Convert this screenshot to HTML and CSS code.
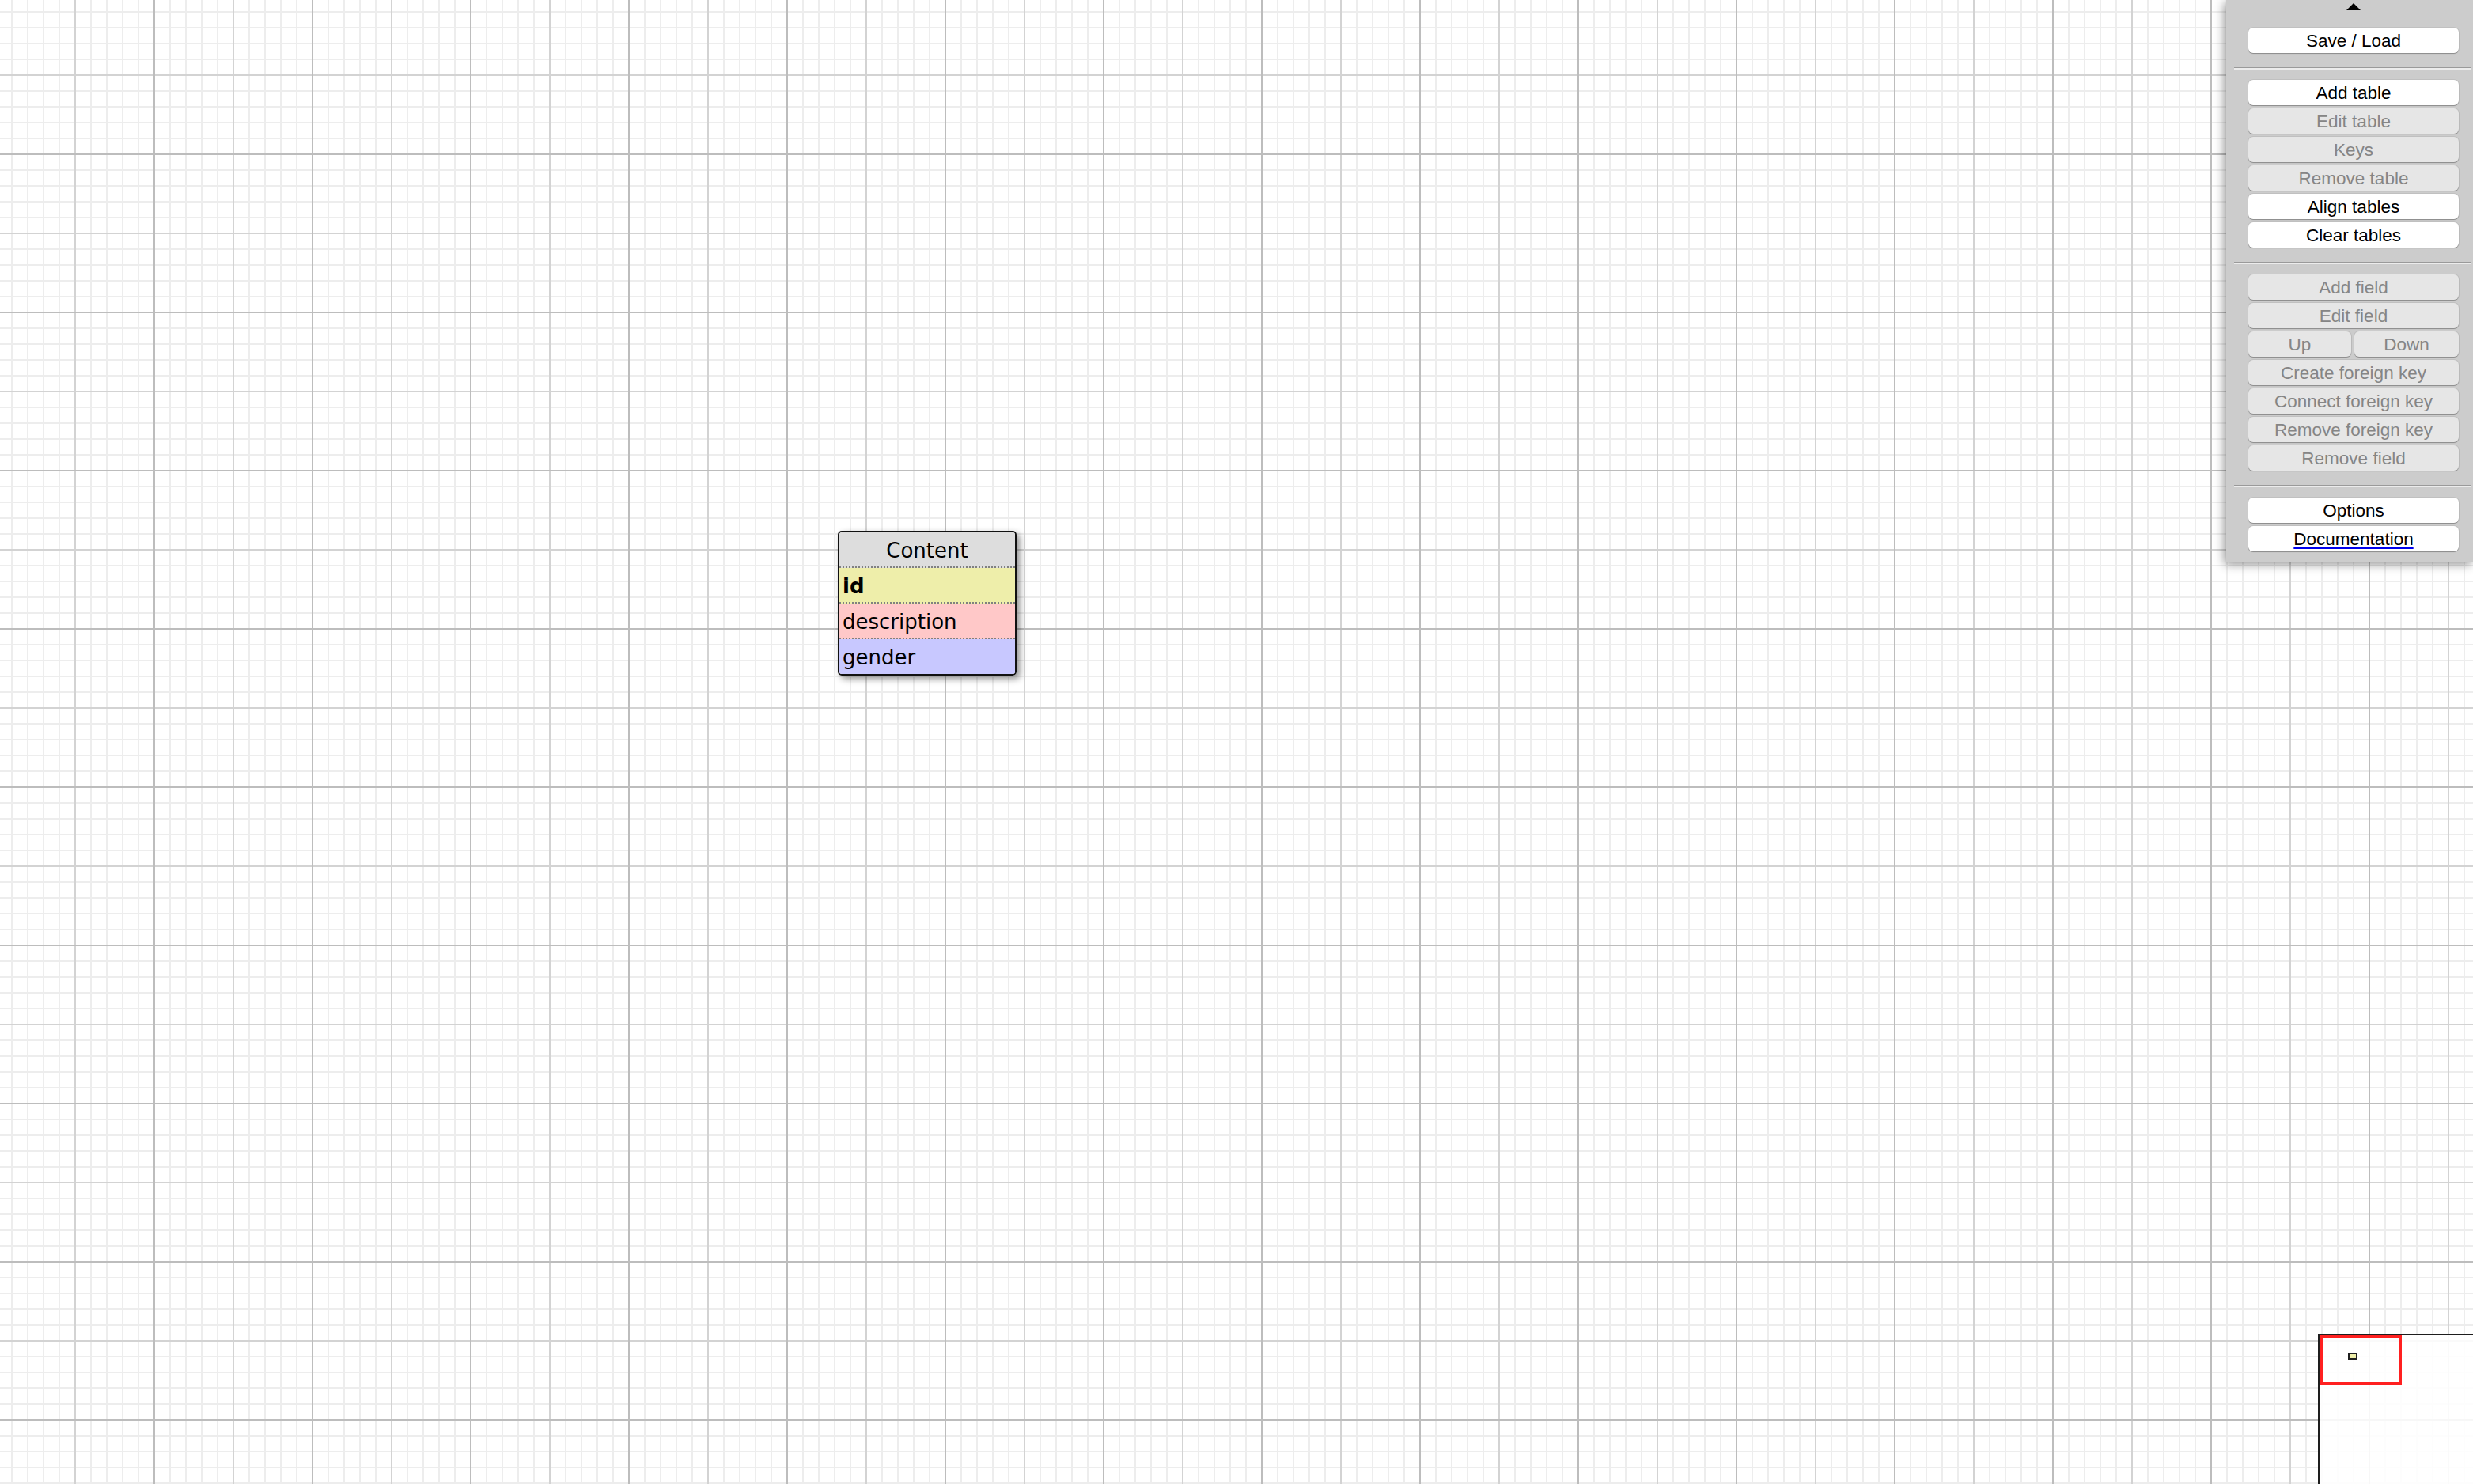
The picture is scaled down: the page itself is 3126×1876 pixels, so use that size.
FILE: index.html
```html
<!DOCTYPE html>
<html>
<head>
<meta charset="utf-8">
<title>WWW SQL Designer</title>
<link rel="stylesheet" href="styles.css">
</head>
<body>
<div class="canvas">
  <div class="db-table">
    <div class="db-title">Content</div>
    <div class="db-row row-key"><b>id</b></div>
    <div class="db-row row-text">description</div>
    <div class="db-row row-enum">gender</div>
  </div>
</div>

<div class="toolbar">
  <div class="toggle"><span class="tri"></span></div>
  <button class="btn">Save / Load</button>
  <div class="sep"></div>
  <div class="group">
    <button class="btn">Add table</button>
    <button class="btn off">Edit table</button>
    <button class="btn off">Keys</button>
    <button class="btn off">Remove table</button>
    <button class="btn">Align tables</button>
    <button class="btn">Clear tables</button>
  </div>
  <div class="sep"></div>
  <div class="group">
    <button class="btn off">Add field</button>
    <button class="btn off">Edit field</button>
    <div class="pair">
      <button class="btn off">Up</button>
      <button class="btn off">Down</button>
    </div>
    <button class="btn off">Create foreign key</button>
    <button class="btn off">Connect foreign key</button>
    <button class="btn off">Remove foreign key</button>
    <button class="btn off">Remove field</button>
  </div>
  <div class="sep"></div>
  <div class="group">
    <button class="btn">Options</button>
    <button class="btn"><span class="link">Documentation</span></button>
  </div>
</div>

<div class="minimap">
  <div class="mini-view"></div>
  <div class="mini-table"></div>
</div>
</body>
</html>
```

FILE: styles.css
```css
html, body {
  margin: 0;
  padding: 0;
  width: 3126px;
  height: 1876px;
  overflow: hidden;
  background: #ffffff;
}

body {
  position: relative;
}

.canvas {
  position: relative;
  width: 3126px;
  height: 1876px;
  background-color: #ffffff;
  background-image:
    linear-gradient(to right, transparent 194px, #bdbdbd 194px, #bdbdbd 196px, transparent 196px),
    linear-gradient(to bottom, transparent 194px, #bdbdbd 194px, #bdbdbd 196px, transparent 196px),
    linear-gradient(to right, transparent 94px, #d3d3d3 94px, #d3d3d3 96px, transparent 96px),
    linear-gradient(to bottom, transparent 94px, #d3d3d3 94px, #d3d3d3 96px, transparent 96px),
    linear-gradient(to right, transparent 14px, #ededed 14px, #ededed 16px, transparent 16px),
    linear-gradient(to bottom, transparent 14px, #ededed 14px, #ededed 16px, transparent 16px);
  background-size: 200px 200px, 200px 200px, 200px 200px, 200px 200px, 20px 20px, 20px 20px;
}

.db-table {
  position: absolute;
  left: 1059px;
  top: 671px;
  width: 226px;
  box-sizing: border-box;
  border: 2px solid #111111;
  border-radius: 5px;
  overflow: hidden;
  box-shadow: 4px 4px 8px rgba(0, 0, 0, 0.45);
  font-family: "DejaVu Sans", Verdana, sans-serif;
  font-size: 26px;
  color: #000000;
}

.db-title {
  height: 43px;
  line-height: 46px;
  text-align: center;
  background: #dddddd;
  border-bottom: 2px dotted #808080;
}

.db-row {
  height: 43px;
  line-height: 46px;
  padding-left: 4px;
  border-bottom: 2px dotted #808080;
  overflow: hidden;
}

.db-row:last-child {
  height: 44px;
  border-bottom: none;
}

.row-key { background: #eeeeaa; }
.row-text { background: #ffc8c8; }
.row-enum { background: #c8c8ff; }

.toolbar {
  position: absolute;
  top: 0;
  right: 0;
  width: 312px;
  height: 710px;
  box-sizing: border-box;
  padding: 0 18px 0 28px;
  background: #cccccc;
  box-shadow: -2px 3px 12px rgba(0, 0, 0, 0.45);
  display: flex;
  flex-direction: column;
  font-family: "Liberation Sans", Arial, sans-serif;
}

.toggle {
  height: 35px;
  flex: 0 0 35px;
  display: flex;
  justify-content: center;
  padding-top: 4px;
  box-sizing: border-box;
}

.tri {
  width: 0;
  height: 0;
  border-left: 9px solid transparent;
  border-right: 9px solid transparent;
  border-bottom: 9px solid #000000;
}

.group {
  display: flex;
  flex-direction: column;
  gap: 4px;
}

.pair {
  display: flex;
  gap: 4px;
}

.pair .btn { flex: 1 1 0; }
.pair .btn:first-child { flex: 0 0 130px; }

.btn {
  display: block;
  height: 32px;
  flex: 0 0 32px;
  width: 100%;
  margin: 0;
  padding: 2px 0 0 0;
  border: none;
  border-radius: 6px;
  background: #ffffff;
  color: #000000;
  font-family: "Liberation Sans", Arial, sans-serif;
  font-size: 22.5px;
  line-height: 30px;
  text-align: center;
  box-shadow: 0 1px 1px rgba(0, 0, 0, 0.28), 0 0 0 1px rgba(0, 0, 0, 0.06);
}

.btn.off {
  background: #e6e6e6;
  color: #858585;
}

.link {
  text-decoration: underline;
  text-decoration-color: #0000ee;
  text-decoration-thickness: 2px;
  text-underline-offset: 3px;
}

.sep {
  margin: 18px -15px 13px -18px;
  height: 0;
  border-top: 1px solid #9a9a9a;
  border-bottom: 2px solid #ececec;
}

.minimap {
  position: absolute;
  left: 2930px;
  top: 1686px;
  width: 196px;
  height: 190px;
  box-sizing: border-box;
  border-top: 2px solid #1e1e1e;
  border-left: 2px solid #1e1e1e;
  background: rgba(255, 255, 255, 0.88);
}

.mini-view {
  position: absolute;
  left: 0;
  top: 0;
  width: 104px;
  height: 63px;
  box-sizing: border-box;
  border: 4px solid #ff2020;
}

.mini-table {
  position: absolute;
  left: 36px;
  top: 22px;
  width: 12px;
  height: 9px;
  box-sizing: border-box;
  border: 2px solid #1e1e1e;
  background: #eeeeaa;
}
```
